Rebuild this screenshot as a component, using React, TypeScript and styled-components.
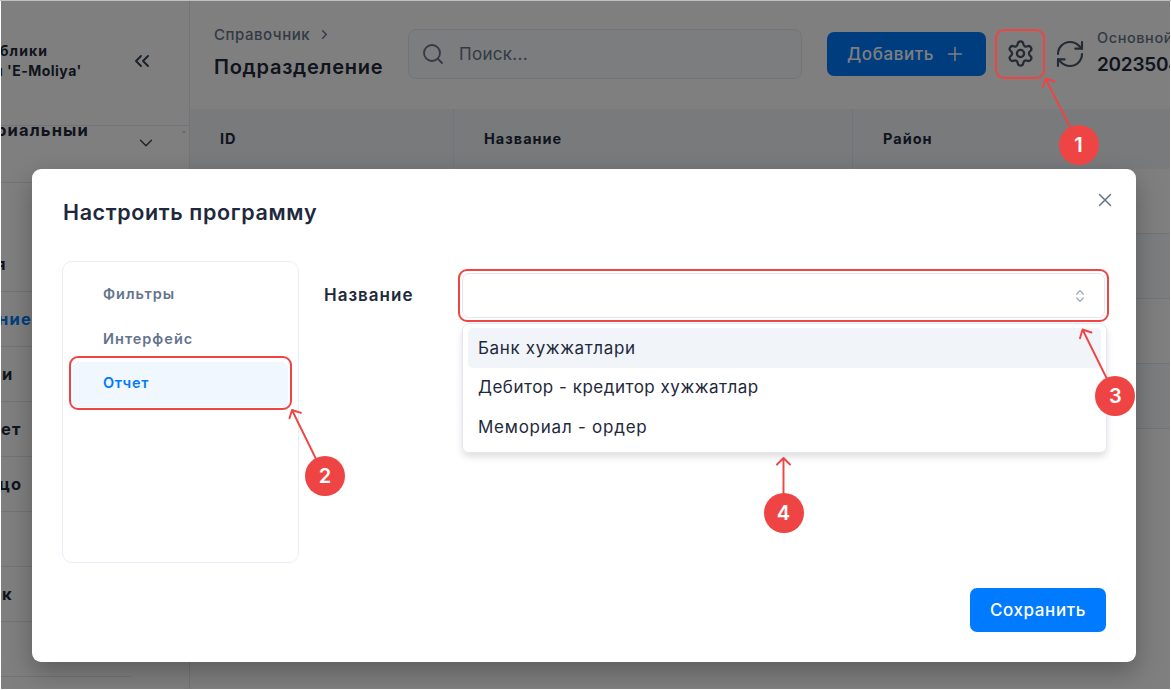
import React from 'react';
import styled, { createGlobalStyle, css } from 'styled-components';
import { ChevronDown, ChevronRight, ChevronsLeft, ChevronsUpDown, Plus, RefreshCw, Search, Settings, X } from 'lucide-react';

const accent = '#ef4444';

const GlobalStyle = createGlobalStyle`
  * { box-sizing: border-box; }
  body { margin: 0; background: #fff; font-family: Inter, "Liberation Sans", sans-serif; color: #1e293b; overflow: hidden; }
`;

const Screen = styled.div`
  position: relative;
  width: 1171px;
  height: 690px;
  padding: 1px;
  background: linear-gradient(#c0c0c0 0 1px, #fff 1px);
  overflow: hidden;
`;

const Page = styled.div`
  display: flex;
  height: 688px;
  background: #fff;
  overflow: hidden;
`;

/* Sidebar */

const Sidebar = styled.aside`
  flex: none;
  width: 189px;
  border-right: 1px solid #e2e8f0;
  overflow: hidden;
`;

const Brand = styled.div`
  display: flex;
  align-items: center;
  justify-content: space-between;
  height: 125px;
  padding: 0 35px 5px 0;
  border-bottom: 1px solid #e2e8f0;
  color: #334155;
`;

const BrandName = styled.div`
  font-size: 14px;
  font-weight: 700;
  line-height: 20px;
  color: #1e293b;
  white-space: nowrap;
`;

const BrandLine = styled.div<{ $shift: number; $spacing: number }>`
  margin-left: ${(p) => p.$shift}px;
  letter-spacing: ${(p) => p.$spacing}px;
`;

const Group = styled.div`
  display: flex;
  align-items: flex-start;
  justify-content: space-between;
  height: 57px;
  padding-right: 3px;
  border-bottom: 1px solid #e2e8f0;
  color: #334155;
  overflow: hidden;
`;

const GroupTitle = styled.div`
  flex: 1;
  margin: -6px 0 0 -5px;
  font-size: 16.5px;
  font-weight: 700;
  line-height: 20px;
  letter-spacing: 1.15px;
  color: #1e293b;
`;

const GroupChevron = styled.div`
  width: 22px;
  height: 22px;
  margin: 6px 25px 0 0;
`;

const ScrollTip = styled.div`
  margin-top: 4px;
  border: 2.5px solid transparent;
  border-top: 0;
  border-bottom: 3px solid #cbd5e1;
`;

const NavItem = styled.div<{ $tall?: boolean; $active?: boolean; $shift?: number; $short?: boolean }>`
  display: flex;
  align-items: flex-end;
  height: ${(p) => (p.$tall ? 109 : 55)}px;
  width: ${(p) => (p.$short ? 130 : 188)}px;
  padding: 0 0 17px;
  text-indent: ${(p) => p.$shift ?? 0}px;
  border-bottom: 1px solid #e2e8f0;
  font-size: 16.5px;
  font-weight: 700;
  line-height: 20px;
  letter-spacing: 1.2px;
  white-space: nowrap;
  color: ${(p) => (p.$active ? '#007aff' : '#1e293b')};
`;

/* Main area */

const Main = styled.main`
  flex: none;
  width: 1010px;
`;

const Header = styled.header`
  display: flex;
  align-items: center;
  height: 108px;
  padding: 0 0 3px 24px;
  color: #475569;
`;

const Titles = styled.div`
  width: 194px;
  margin-bottom: 4px;
  white-space: nowrap;
`;

const Crumb = styled.div`
  display: flex;
  align-items: center;
  gap: 7px;
  height: 24px;
  font-size: 15px;
  font-weight: 500;
  letter-spacing: 0.54px;
  color: #64748b;
`;

const PageTitle = styled.div`
  margin-top: 6px;
  font-size: 20px;
  font-weight: 600;
  line-height: 28px;
  letter-spacing: 0.76px;
  color: #1e293b;
`;

const SearchBox = styled.div`
  display: flex;
  align-items: center;
  gap: 14px;
  width: 394px;
  height: 50px;
  padding-left: 12px;
  border: 1px solid #e2e8f0;
  border-radius: 8px;
  background: #f8fafc;
  font-size: 17px;
  letter-spacing: 0.3px;
  color: #64748b;
`;

const primary = css`
  display: flex;
  align-items: center;
  height: 44px;
  border-radius: 7px;
  background: #007aff;
  color: #fff;
  font-size: 17px;
  font-weight: 500;
  letter-spacing: 0.6px;
`;

const AddButton = styled.div`
  ${primary}
  width: 159px;
  margin-left: 25px;
  padding-left: 20px;
  gap: 10px;
`;

const HeaderIcon = styled.div<{ $gap: number }>`
  display: flex;
  margin-left: ${(p) => p.$gap}px;
`;

const Account = styled.div`
  margin: 0 0 2px 11px;
  white-space: nowrap;
`;

const AccountKind = styled.div`
  font-size: 14.5px;
  font-weight: 500;
  line-height: 20px;
  letter-spacing: 0.58px;
  color: #64748b;
`;

const AccountNumber = styled.div`
  margin-top: 4px;
  font-size: 19px;
  font-weight: 600;
  line-height: 26px;
  letter-spacing: -0.25px;
  color: #1e293b;
`;

const TableHead = styled.div`
  display: grid;
  grid-template-columns: 264px 399px 1fr;
  height: 61px;
  background: #f1f5f9;
`;

const HeadCell = styled.div`
  display: flex;
  align-items: center;
  padding: 0 0 2px 30px;
  border-right: 1px solid #e2e8f0;
  font-size: 14.5px;
  font-weight: 700;
  letter-spacing: 1px;
`;

const TableRow = styled.div<{ $striped?: boolean }>`
  height: 65px;
  border-bottom: 1px solid #e2e8f0;
  background: ${(p) => (p.$striped ? '#f8fafc' : '#fff')};
`;

const TableRows = styled.div`
  margin-top: -1px;
`;

/* Dialog */

const Backdrop = styled.div`
  position: absolute;
  inset: 1px;
  padding: 168px 0 0 31px;
  background: rgba(0, 0, 0, 0.5);
  overflow: hidden;
`;

const Dialog = styled.section`
  display: flex;
  flex-direction: column;
  width: 1104px;
  height: 493px;
  padding: 20px 30px 30px;
  border-radius: 9px;
  background: #fff;
  box-shadow: 0 10px 26px rgba(0, 0, 0, 0.28);
`;

const DialogHeader = styled.div`
  display: flex;
  justify-content: space-between;
  height: 72px;
  margin: 0 -10px 0 1px;
  color: #64748b;
`;

const DialogTitle = styled.div`
  margin-top: 9px;
  font-size: 21.5px;
  font-weight: 600;
  line-height: 28px;
  letter-spacing: 0.62px;
  color: #1e293b;
`;

const DialogBody = styled.div`
  display: flex;
  align-items: flex-start;
`;

const Tabs = styled.div`
  flex: none;
  width: 237px;
  height: 302px;
  padding: 11px 10px;
  border: 1px solid #e8eef6;
  border-radius: 10px;
`;

const Tab = styled.div<{ $active?: boolean; $spacing: number }>`
  display: flex;
  align-items: center;
  height: 44.5px;
  padding: 0 0 3px 30px;
  border-radius: 6px;
  font-size: 14.5px;
  font-weight: 600;
  letter-spacing: ${(p) => p.$spacing}px;
  color: ${(p) => (p.$active ? '#007aff' : '#64748b')};
  background: ${(p) => (p.$active ? '#f1f7ff' : 'transparent')};
`;

const FieldLabel = styled.div`
  flex: none;
  width: 138px;
  margin: 22px 0 0 25px;
  font-size: 17px;
  font-weight: 600;
  line-height: 24px;
  letter-spacing: 1px;
`;

const Field = styled.div`
  flex: none;
  width: 645px;
  padding-top: 12px;
`;

const SelectBox = styled.div`
  display: flex;
  align-items: center;
  justify-content: flex-end;
  height: 45px;
  margin-right: 2px;
  padding-right: 16px;
  border: 1px solid #e2e8f0;
  border-radius: 7px;
  color: #94a3b8;
`;

const Menu = styled.div`
  height: 130px;
  margin-top: 5px;
  padding: 4px 5px;
  border: 1px solid #e2e8f0;
  border-radius: 7px;
  box-shadow: 0 4px 7px rgba(0, 0, 0, 0.13);
`;

const Option = styled.div<{ $active?: boolean; $spacing: number }>`
  display: flex;
  align-items: center;
  height: 39.5px;
  padding-left: 10px;
  border-radius: 5px;
  font-size: 17px;
  letter-spacing: ${(p) => p.$spacing}px;
  background: ${(p) => (p.$active ? '#f1f4f9' : 'transparent')};
`;

const DialogFooter = styled.div`
  display: flex;
  justify-content: flex-end;
  margin-top: auto;
`;

const SaveButton = styled.div`
  ${primary}
  justify-content: center;
  width: 136px;
`;

/* Numbered callouts lying over the page */

const Highlight = styled.div<{ $x: number; $y: number; $w: number; $h: number }>`
  position: absolute;
  left: ${(p) => p.$x}px;
  top: ${(p) => p.$y}px;
  width: ${(p) => p.$w}px;
  height: ${(p) => p.$h}px;
  border: 2px solid ${accent};
  border-radius: 9px;
`;

const Arrows = styled.svg`
  position: absolute;
  inset: 0;
`;

const Marker = styled.div<{ $x: number; $y: number }>`
  position: absolute;
  left: ${(p) => p.$x - 20}px;
  top: ${(p) => p.$y - 20}px;
  display: flex;
  align-items: center;
  justify-content: center;
  width: 40px;
  height: 40px;
  border-radius: 50%;
  background: ${accent};
  color: #fff;
  font-size: 20px;
  font-weight: 600;
`;

export default function App() {
  return (
    <Screen>
      <GlobalStyle />
      <Page>
        <Sidebar>
          <Brand>
            <BrandName>
              <BrandLine $shift={-1} $spacing={1.08}>блики</BrandLine>
              <BrandLine $shift={-7} $spacing={0.48}>и 'E-Moliya'</BrandLine>
            </BrandName>
            <ChevronsLeft size={24} strokeWidth={1.9} />
          </Brand>
          <Group>
            <GroupTitle>риальный</GroupTitle>
            <GroupChevron><ChevronDown size={22} strokeWidth={1.5} /></GroupChevron>
            <ScrollTip />
          </Group>
          <NavItem $tall $shift={-5}>я</NavItem>
          <NavItem $active $shift={-3}>ние</NavItem>
          <NavItem $shift={1}>и</NavItem>
          <NavItem $shift={0}>ет</NavItem>
          <NavItem $shift={-2}>цо</NavItem>
          <NavItem />
          <NavItem $shift={1}>к</NavItem>
          <NavItem $short />
        </Sidebar>
        <Main>
          <Header>
            <Titles>
              <Crumb>Справочник <ChevronRight size={15} strokeWidth={2.2} /></Crumb>
              <PageTitle>Подразделение</PageTitle>
            </Titles>
            <SearchBox><Search size={24} strokeWidth={1.8} />Поиск...</SearchBox>
            <AddButton>Добавить <Plus size={22} strokeWidth={1.6} /></AddButton>
            <HeaderIcon $gap={20}><Settings size={29} strokeWidth={1.9} /></HeaderIcon>
            <HeaderIcon $gap={19}><RefreshCw size={32} strokeWidth={1.6} /></HeaderIcon>
            <Account>
              <AccountKind>Основной</AccountKind>
              <AccountNumber>2023504</AccountNumber>
            </Account>
          </Header>
          <TableHead>
            <HeadCell>ID</HeadCell>
            <HeadCell>Название</HeadCell>
            <HeadCell>Район</HeadCell>
          </TableHead>
          <TableRows>
            <TableRow />
            <TableRow $striped />
            <TableRow />
            <TableRow $striped />
          </TableRows>
        </Main>
      </Page>

      <Backdrop>
        <Dialog>
          <DialogHeader>
            <DialogTitle>Настроить программу</DialogTitle>
            <X size={22} strokeWidth={1.6} />
          </DialogHeader>
          <DialogBody>
            <Tabs>
              <Tab $spacing={0.97}>Фильтры</Tab>
              <Tab $spacing={1}>Интерфейс</Tab>
              <Tab $active $spacing={0.7}>Отчет</Tab>
            </Tabs>
            <FieldLabel>Название</FieldLabel>
            <Field>
              <SelectBox><ChevronsUpDown size={16} strokeWidth={1.8} /></SelectBox>
              <Menu>
                <Option $active $spacing={0.63}>Банк хужжатлари</Option>
                <Option $spacing={0.51}>Дебитор - кредитор хужжатлар</Option>
                <Option $spacing={0.76}>Мемориал - ордер</Option>
              </Menu>
            </Field>
          </DialogBody>
          <DialogFooter><SaveButton>Сохранить</SaveButton></DialogFooter>
        </Dialog>
      </Backdrop>

      <Highlight $x={995} $y={28.5} $w={50} $h={50} />
      <Highlight $x={68.5} $y={356} $w={223.5} $h={54} />
      <Highlight $x={458} $y={269} $w={651} $h={53} />
      <Arrows width="1171" height="690" fill="none" stroke={accent} strokeWidth="1.9" strokeLinecap="round" strokeLinejoin="round">
        <path d="M1070 127L1045.5 78.5M1042.7 87L1045.5 78.5L1054.5 81.5" />
        <path d="M316 459L292 410M289.5 418.3L292 410L301 412.8" />
        <path d="M1107 379L1082.5 329.5M1080 338.3L1082.5 329.5L1091.5 332.5" />
        <path d="M783.5 494V458M777 464.5L783.5 458L790 464.5" />
      </Arrows>
      <Marker $x={1078.5} $y={145}>1</Marker>
      <Marker $x={325} $y={476.3}>2</Marker>
      <Marker $x={1115.4} $y={396}>3</Marker>
      <Marker $x={783.5} $y={513}>4</Marker>
    </Screen>
  );
}
